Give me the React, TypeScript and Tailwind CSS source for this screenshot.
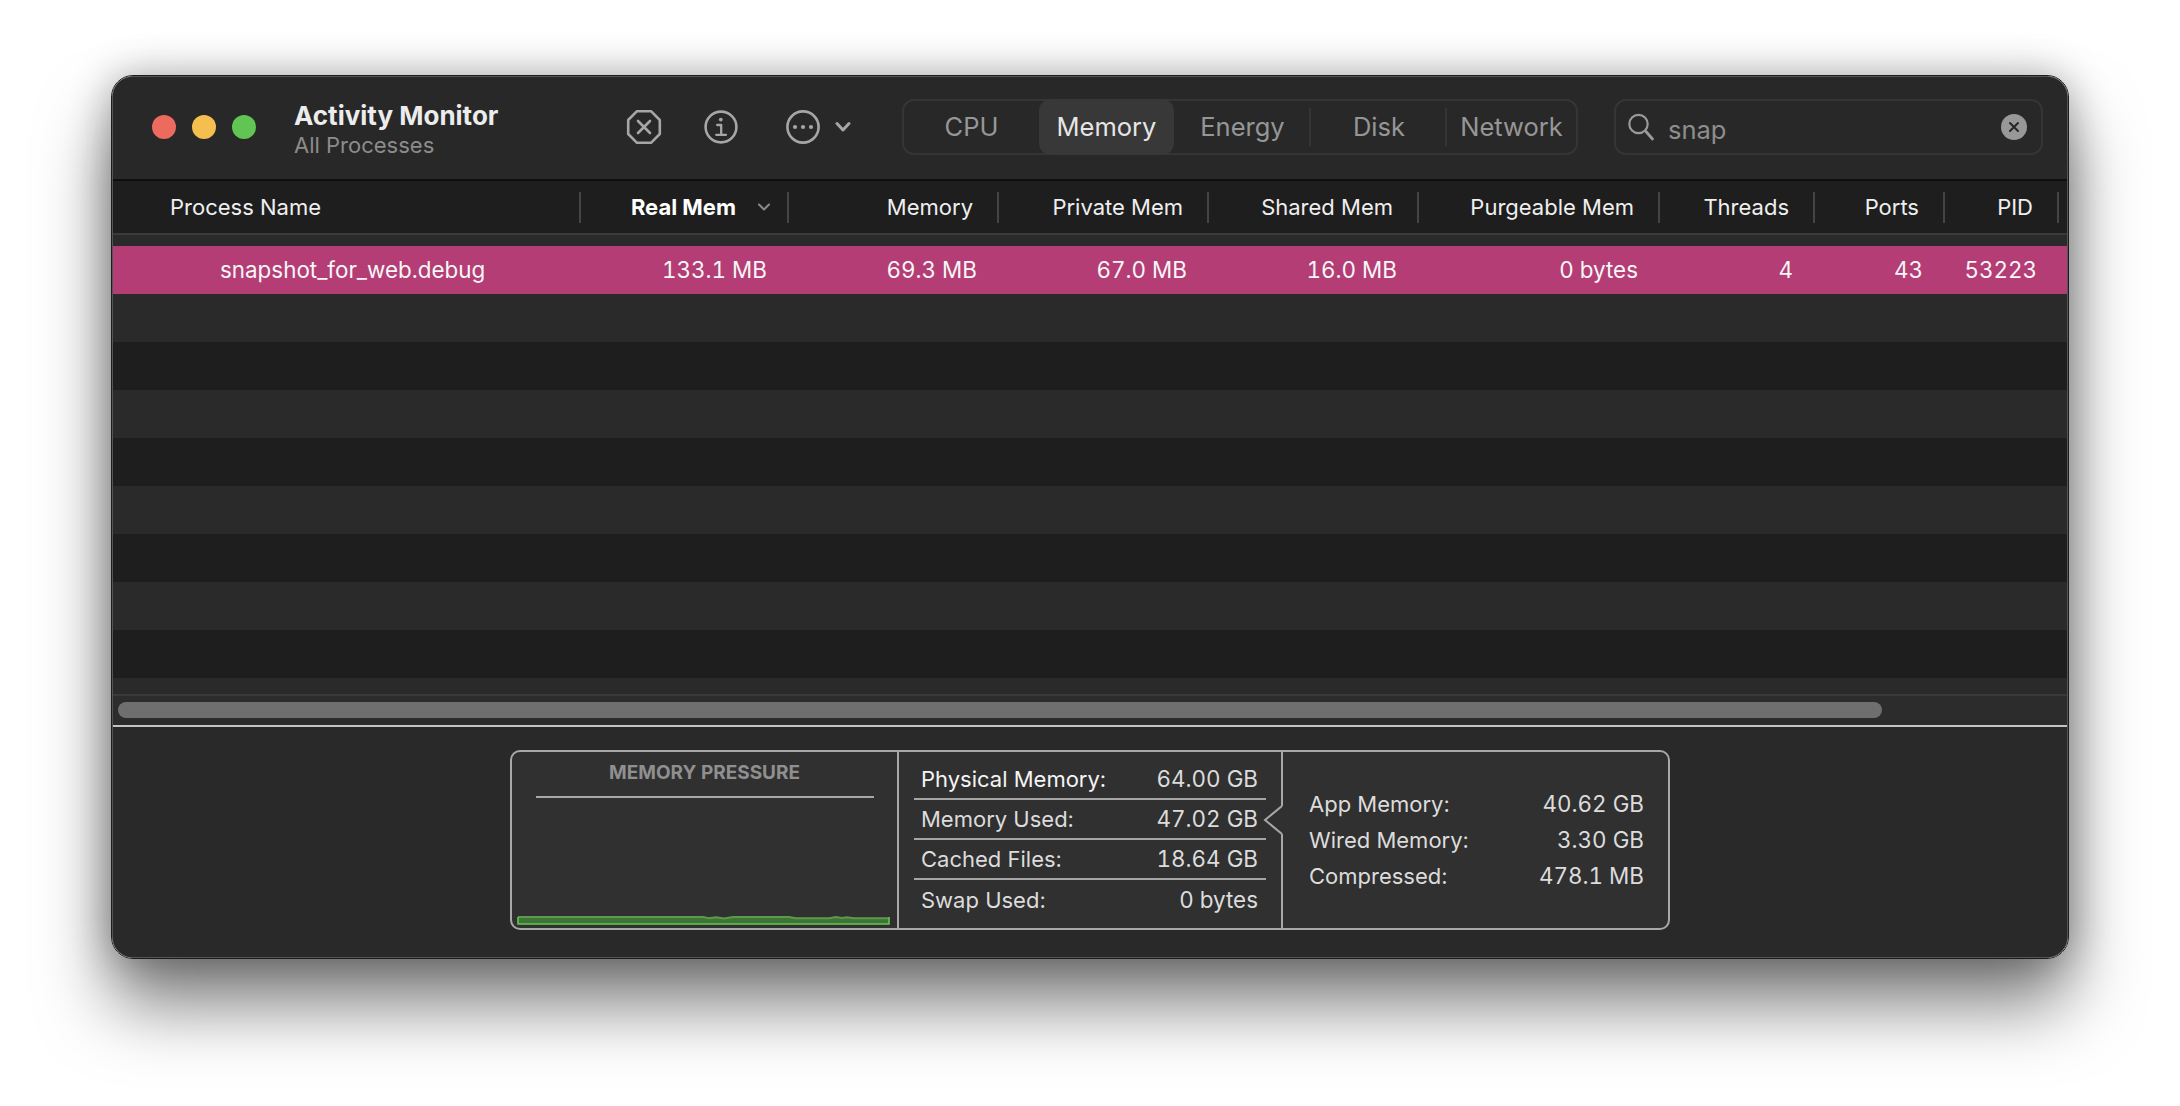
import React from "react";

const font = { fontFamily: "Inter, 'Liberation Sans', sans-serif" };

const columns = [
  { label: "Process Name", w: "w-[468px]", value: "snapshot_for_web.debug" },
  { label: "Real Mem", w: "w-[208px]", value: "133.1 MB" },
  { label: "Memory", w: "w-[210px]", value: "69.3 MB" },
  { label: "Private Mem", w: "w-[210px]", value: "67.0 MB" },
  { label: "Shared Mem", w: "w-[210px]", value: "16.0 MB" },
  { label: "Purgeable Mem", w: "w-[241px]", value: "0 bytes" },
  { label: "Threads", w: "w-[155px]", value: "4" },
  { label: "Ports", w: "w-[130px]", value: "43" },
  { label: "PID", w: "w-[114px]", value: "53223" },
];

const tabs = [
  { label: "CPU", w: "w-[135px]" },
  { label: "Memory", w: "w-[135px]" },
  { label: "Energy", w: "w-[137px]" },
  { label: "Disk", w: "w-[136px]" },
  { label: "Network", w: "w-[129px]" },
];

function Traffic() {
  return (
    <div className="flex items-center gap-[16px]">
      <div className="w-[24px] h-[24px] rounded-full bg-[#ec6a5e]" />
      <div className="w-[24px] h-[24px] rounded-full bg-[#f4bf4f]" />
      <div className="w-[24px] h-[24px] rounded-full bg-[#61c554]" />
    </div>
  );
}

function StopIcon() {
  return (
    <svg width="36" height="36" viewBox="0 0 36 36" fill="none" stroke="#a6a6a6" strokeWidth="2.6" strokeLinejoin="round" strokeLinecap="round">
      <path d="M11 2.2 H25 L33.8 11 V25 L25 33.8 H11 L2.2 25 V11 Z" />
      <path d="M12 12 L24 24 M24 12 L12 24" />
    </svg>
  );
}

function InfoIcon() {
  return (
    <svg width="36" height="36" viewBox="0 0 36 36" fill="none" stroke="#a6a6a6" strokeWidth="2.6" strokeLinecap="round" strokeLinejoin="round">
      <circle cx="18" cy="18" r="15.4" />
      <circle cx="17.8" cy="10.6" r="1.9" fill="#a6a6a6" stroke="none" />
      <path d="M14.2 16 H18.2 V25.6 M13.2 25.8 H23" strokeWidth="2.3" />
    </svg>
  );
}

function MoreIcon() {
  return (
    <svg width="36" height="36" viewBox="0 0 36 36" fill="none" stroke="#a6a6a6" strokeWidth="2.6">
      <circle cx="18" cy="18" r="15.6" />
      <circle cx="10" cy="18" r="2.1" fill="#a6a6a6" stroke="none" />
      <circle cx="18" cy="18" r="2.1" fill="#a6a6a6" stroke="none" />
      <circle cx="26" cy="18" r="2.1" fill="#a6a6a6" stroke="none" />
    </svg>
  );
}

function TitleBar() {
  return (
    <div className="flex items-center h-[104px] bg-[#282828] border-b-2 border-[#0e0e0e] pb-[2px] pl-[39px]">
      <Traffic />
      <div className="ml-[38px] w-[332px] flex flex-col pt-[4px]">
        <div className="text-[26px] leading-[32px] font-bold text-[#ececec]">Activity Monitor</div>
        <div className="text-[22px] leading-[26px] text-[#8c8c8c]">All Processes</div>
      </div>
      <div className="flex items-center">
        <StopIcon />
        <div className="ml-[41px]"><InfoIcon /></div>
        <div className="ml-[46px]"><MoreIcon /></div>
        <svg className="ml-[14px]" width="16" height="12" viewBox="0 0 16 12" fill="none" stroke="#a6a6a6" strokeWidth="3" strokeLinecap="round" strokeLinejoin="round">
          <path d="M2 2.5 L8 9 L14 2.5" />
        </svg>
      </div>
      <div className="ml-[51px] w-[676px] h-[56px] rounded-[12px] border-2 border-[#353535] flex items-stretch relative">
        {tabs.map((t, i) => (
          <div
            key={t.label}
            className={
              i === 1
                ? `${t.w} flex items-center justify-center text-[25.5px] text-[#e6e6e6] bg-[#383838] rounded-[12px] -my-[2px]`
                : `${t.w} flex items-center justify-center text-[25.5px] text-[#969696]`
            }
          >
            {t.label}
          </div>
        ))}
        <div className="absolute left-[405px] top-[7px] bottom-[7px] w-[2px] bg-[#353535]" />
        <div className="absolute left-[541px] top-[7px] bottom-[7px] w-[2px] bg-[#353535]" />
      </div>
      <div className="ml-[36px] w-[429px] h-[56px] rounded-[12px] border-2 border-[#353535] flex items-center pl-[11px] pr-[14px]">
        <svg width="28" height="30" viewBox="0 0 28 30" fill="none" stroke="#9a9a9a" strokeWidth="2.2" strokeLinecap="round">
          <circle cx="11.5" cy="12" r="9.2" />
          <path d="M18.5 19 L25.5 27" strokeWidth="2.8" />
        </svg>
        <div className="ml-[13px] text-[25.5px] leading-[36px] text-[#8e8e8e] flex-1 pt-[6px]">snap</div>
        <div className="w-[26px] h-[26px] rounded-full bg-[#989898] flex items-center justify-center">
          <svg width="12" height="12" viewBox="0 0 12 12" fill="none" stroke="#262626" strokeWidth="2" strokeLinecap="round">
            <path d="M2 2 L10 10 M10 2 L2 10" />
          </svg>
        </div>
      </div>
    </div>
  );
}

function Header() {
  return (
    <div className="flex h-[54px] bg-[#1e1e1e] border-b-2 border-[#3a3a3a] items-center">
      {columns.map((c, i) => (
        <div key={c.label} className={`${c.w} h-[31px] flex items-center border-r-2 border-[#444444] shrink-0 ${i === 0 ? "justify-start pl-[57px]" : i === 1 ? "justify-end pr-[16px]" : "justify-end pr-[24px]"}`}>
          <span className={i === 1 ? "text-[22px] font-bold text-white" : "text-[22px] text-[#efefef]"}>{c.label}</span>
          {i === 1 && (
            <svg className="ml-[21px]" width="14" height="10" viewBox="0 0 14 10" fill="none" stroke="#8a8a8a" strokeWidth="2" strokeLinecap="round" strokeLinejoin="round">
              <path d="M2 2.5 L7 7.5 L12 2.5" />
            </svg>
          )}
        </div>
      ))}
    </div>
  );
}

function SelectedRow() {
  return (
    <div className="flex h-[48px] bg-[#b43d75] items-center text-[#f6f6f6] text-[22.4px] tabular-nums">
      {columns.map((c, i) => (
        <div key={c.label} className={`${c.w} shrink-0 ${i === 0 ? "pl-[107px]" : "text-right pr-[22px]"}`}>
          {c.value}
        </div>
      ))}
    </div>
  );
}

function Rows() {
  const rows = [0, 1, 2, 3, 4, 5, 6, 7];
  return (
    <div className="flex flex-col">
      <div className="h-[11px] bg-[#2a2a2a]" />
      <SelectedRow />
      {rows.map((r) => (
        <div key={r} className={r % 2 === 0 ? "h-[48px] bg-[#2a2a2a]" : "h-[48px] bg-[#1e1e1e]"} />
      ))}
      <div className="h-[16px] bg-[#2a2a2a]" />
      <div className="h-[2px] bg-[#3a3a3a]" />
    </div>
  );
}

function Scrollbar() {
  return (
    <div className="h-[29px] bg-[#2c2c2c] pl-[5px] pt-[6px]">
      <div className="w-[1764px] h-[16px] rounded-full bg-[#6f6f6f]" />
    </div>
  );
}

function StatRow({ label, value, bright, border }: { label: string; value: string; bright?: boolean; border?: boolean }) {
  return (
    <div className={`h-[40px] flex items-center justify-between pl-[7px] pr-[8px] ${border ? "border-b-2 border-[#a6a6a6]" : ""} ${bright ? "text-[#f4f4f4]" : "text-[#dcdcdc]"}`}>
      <span>{label}</span>
      <span className="text-[#dcdcdc] text-[22.4px] tabular-nums">{value}</span>
    </div>
  );
}

function SummaryRow({ label, value }: { label: string; value: string }) {
  return (
    <div className="h-[36px] flex items-center justify-between">
      <span>{label}</span>
      <span className="text-[22.4px] tabular-nums">{value}</span>
    </div>
  );
}

function Panel() {
  return (
    <div className="flex justify-center pt-[23px] bg-[#292929] h-[230px]">
      <div className="relative flex w-[1160px] h-[180px] bg-[#303030] border-2 border-[#a8a8a8] rounded-[10px] text-[22px]">
        <div className="w-[387px] shrink-0 border-r-2 border-[#a8a8a8] flex flex-col items-center relative">
          <div className="mt-[9px] text-[19px] leading-[24px] font-bold text-[#8f8f8f]">MEMORY PRESSURE</div>
          <div className="mt-[11px] w-[338px] h-[2px] bg-[#a8a8a8]" />
          <svg className="absolute left-[5px] bottom-[3px]" width="373" height="10" viewBox="0 0 373 10" preserveAspectRatio="none">
            <path d="M1 2 H186 L192 3.2 L199 2.2 L207 3.4 L216 2 H272 L279 3.2 H312 L319 2.1 L325 3 L330 2.2 L337 3.2 H372 V9 H1 Z" fill="#3f7337" />
            <path d="M1 2 H186 L192 3.2 L199 2.2 L207 3.4 L216 2 H272 L279 3.2 H312 L319 2.1 L325 3 L330 2.2 L337 3.2 H372" fill="none" stroke="#5b9a4c" strokeWidth="2" />
            <path d="M1 2 V9 H372 V2" fill="none" stroke="#63c84f" strokeWidth="1.6" />
          </svg>
        </div>
        <div className="w-[384px] shrink-0 border-r-2 border-[#a8a8a8] pl-[15px] pr-[15px] pt-[8px]">
          <StatRow label="Physical Memory:" value="64.00 GB" bright border />
          <StatRow label="Memory Used:" value="47.02 GB" border />
          <StatRow label="Cached Files:" value="18.64 GB" border />
          <StatRow label="Swap Used:" value="0 bytes" />
        </div>
        <div className="flex-1 flex flex-col justify-center pl-[26px] pr-[24px] text-[#dcdcdc]">
          <SummaryRow label="App Memory:" value="40.62 GB" />
          <SummaryRow label="Wired Memory:" value="3.30 GB" />
          <SummaryRow label="Compressed:" value="478.1 MB" />
        </div>
        <svg className="absolute left-[751px] top-[52px]" width="20" height="32" viewBox="0 0 20 32" fill="none">
          <path d="M19 2 L2 16 L19 30 Z" fill="#303030" />
          <path d="M20 2 L19 2 L2 16 L19 30 L20 30 Z" fill="#303030" />
          <path d="M19 2 L2 16 L19 30" stroke="#a8a8a8" strokeWidth="2" />
        </svg>
      </div>
    </div>
  );
}

export default function App() {
  return (
    <div className="w-[2180px] h-[1106px] bg-white overflow-hidden pl-[111px] pt-[75px]" style={font}>
      <div className="w-[1958px] h-[884px] rounded-[22px] border border-[#1c1c1c] shadow-[0_0_40px_rgba(0,0,0,0.3),0_46px_70px_rgba(0,0,0,0.5)]">
        <div className="h-full rounded-[21px] border border-[#555555] overflow-hidden bg-[#292929]">
          <TitleBar />
          <Header />
          <Rows />
          <Scrollbar />
          <div className="h-[2px] bg-[#c4c4c4]" />
          <Panel />
        </div>
      </div>
    </div>
  );
}
